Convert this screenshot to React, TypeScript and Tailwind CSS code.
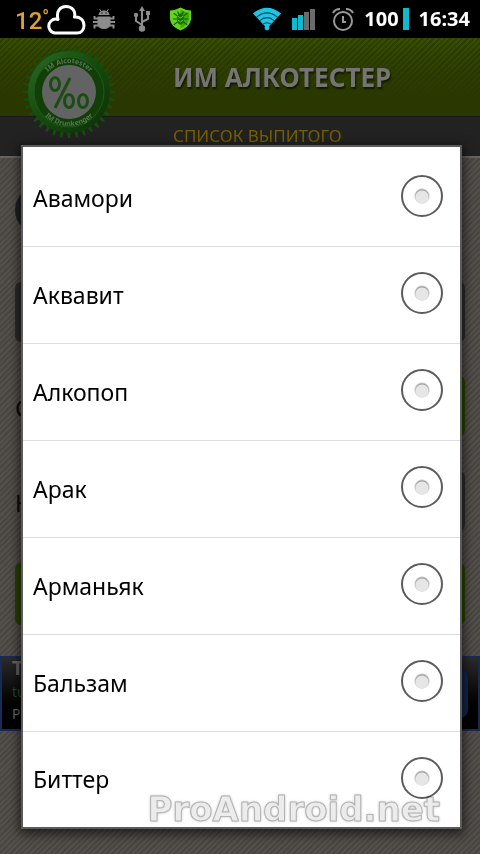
const drinks = ['Авамори', 'Аквавит', 'Алкопоп', 'Арак', 'Арманьяк', 'Бальзам', 'Биттер'];

const teeth = Array.from({ length: 36 }, (_, i) => i * 10);

function WeatherIcon() {
  return (
    <svg width="40" height="32" viewBox="0 0 40 32" fill="none" stroke="#fff" strokeWidth="3" strokeLinejoin="round">
      <path d="M8 30 A7 7 0 0 1 4 18 Q7 15 11 16.5 C9 8 13 3.5 19 3.5 C25 3.5 29 8 27.5 14 C33 13.5 37 17 37 22.5 C37 27 34 30 30 30 Z" />
    </svg>
  );
}

function DebugIcon() {
  return (
    <svg width="22" height="22" viewBox="0 0 22 22" fill="#8c8c8c" stroke="#8c8c8c">
      <path d="M5.5 7 C6 1 16 1 16.5 7 Z" stroke="none" />
      <path d="M6.5 1 L8.5 4 M15.5 1 L13.5 4" fill="none" />
      <path d="M5 10.5 H1.5 V8 M5 14 H0 M5 17.5 H1.5 V20.5 M17 10.5 H20.5 V8 M17 14 H22 M17 17.5 H20.5 V20.5" fill="none" strokeWidth="2" />
      <path d="M4.5 8.5 H17.5 V17 Q16 21 11 21 Q6 21 4.5 17 Z" stroke="none" />
      <path d="M8.5 5 H9.7 M12.3 5 H13.5" stroke="#000" />
    </svg>
  );
}

function UsbIcon() {
  return (
    <svg width="18" height="26" viewBox="0 0 18 26" fill="none" stroke="#8c8c8c" strokeWidth="2">
      <path d="M9 4 V22 M9 19 L3 15 V10 M9 16 L15 13 V8" />
      <path d="M9 0 L12 5 H6 Z M13 5 h4 v4 h-4 Z" fill="#8c8c8c" stroke="none" />
      <circle cx="3" cy="9" r="2.2" fill="#8c8c8c" stroke="none" />
      <circle cx="9" cy="22.5" r="3.2" fill="#8c8c8c" stroke="none" />
    </svg>
  );
}

function ShieldIcon() {
  return (
    <svg width="23" height="24" viewBox="0 0 24 24">
      <path d="M12 0 Q17 3 23 3 V12 Q22 20 12 24 Q2 20 1 12 V3 Q7 3 12 0Z" fill="#63d61b" />
      <path d="M12 2 Q17 5 21 5 V12 Q20 18 12 22Z" fill="#3eab0c" />
      <g fill="none" stroke="#155c05" strokeWidth="1.3">
        <path d="M9 9 L5 6 M15 9 L19 6 M8 12 H4 M16 12 H20 M9 15 L5 18 M15 15 L19 18 M10 7 L9 4 M14 7 L15 4" />
      </g>
      <ellipse cx="12" cy="12" rx="4" ry="6" fill="#1b6d08" />
      <path d="M9 9 L12 11 L15 9 M9 13 L12 15 L15 13" fill="none" stroke="#65cf25" />
    </svg>
  );
}

function WifiIcon() {
  return (
    <svg width="30" height="24" viewBox="0 0 32 24">
      <path d="M1 6 Q16 -6 31 6 L18 20 A2.5 2.5 0 1 1 14 20 Z" fill="#1fc4e4" />
      <g fill="none" stroke="#00495a" strokeWidth="1.2">
        <path d="M5 10 Q16 1 27 10 M8 14 Q16 7 24 14 M11 18 Q16 14 21 18" />
      </g>
    </svg>
  );
}

function SignalIcon() {
  return (
    <svg width="24" height="22" viewBox="0 0 24 22">
      <path d="M0 10 h5 v12 h-5 Z M6 7 h5 v15 h-5 Z" fill="#12b9cd" />
      <path d="M12 4 h5 v18 h-5 Z M18 1 h5 v21 h-5 Z" fill="#6b6b6b" />
    </svg>
  );
}

function AlarmIcon() {
  return (
    <svg width="22" height="24" viewBox="0 0 22 24" fill="none" stroke="#999" strokeWidth="2">
      <circle cx="11" cy="14" r="9" />
      <path d="M11 9 V15 H14 M1 6 Q3 2 8 2 M21 6 Q19 2 14 2" />
    </svg>
  );
}

function Badge() {
  return (
    <svg className="block" width="96" height="96" viewBox="-48 -48 96 96" fontFamily="Noto Sans, Open Sans, sans-serif">
      <defs>
        <linearGradient id="ring" x1="0" y1="0" x2="1" y2="1">
          <stop offset="0" stopColor="#2c6a27" />
          <stop offset="0.45" stopColor="#154d0d" />
          <stop offset="1" stopColor="#0c2f08" />
        </linearGradient>
        <path id="arcTop" d="M-29 0 A29 29 0 0 1 29 0" />
        <path id="arcBottom" d="M-34 0 A34 34 0 0 0 34 0" />
      </defs>
      {teeth.map((angle) => (
        <path key={angle} d="M-2 -39 L-1 -46 H1 L2 -39 Z" fill="#174b10" transform={`rotate(${angle})`} />
      ))}
      <circle r="41" fill="url(#ring)" />
      <circle r="35" fill="#123f08" stroke="#225a1c" />
      <circle r="27" fill="#636363" />
      <text fontSize="7" fontWeight="700" fill="#567554" textAnchor="middle">
        <textPath href="#arcTop" startOffset="50%">IM Alcotester</textPath>
      </text>
      <text fontSize="7" fontWeight="700" fill="#567554" textAnchor="middle">
        <textPath href="#arcBottom" startOffset="50%">IM Drunkenger</textPath>
      </text>
      <g fill="none" stroke="#1b4d13" strokeWidth="3">
        <ellipse cx="-14" cy="-8" rx="4.5" ry="6.5" />
        <ellipse cx="0" cy="9" rx="4.5" ry="6.5" />
        <ellipse cx="14" cy="9" rx="4.5" ry="6.5" />
        <path d="M1 -14 L-14 16" />
      </g>
    </svg>
  );
}

function StatusBar() {
  return (
    <div className="flex h-[38px] items-center bg-black pr-2.5 pl-[15px] font-bold text-white">
      <span className="flex w-8 items-start pt-1 font-['Roboto',sans-serif] text-2xl font-medium text-[#e0a030]">
        12<span className="text-lg leading-6">°</span>
      </span>
      <WeatherIcon />
      <div className="ml-1.5 flex items-center gap-[18px]">
        <DebugIcon />
        <UsbIcon />
        <ShieldIcon />
      </div>
      <div className="ml-auto flex items-center">
        <WifiIcon />
        <span className="ml-2.5"><SignalIcon /></span>
        <span className="ml-4"><AlarmIcon /></span>
        <span className="ml-2.5 text-xl">100</span>
        <span className="ml-1 h-[22px] w-1.5 bg-[#12b9cd]" />
        <span className="ml-2.5 text-xl">16:34</span>
      </div>
    </div>
  );
}

function Header() {
  return (
    <header className="relative">
      <div className="flex h-[78px] items-center bg-[linear-gradient(#2a380000,#2a3800_85%),repeating-linear-gradient(135deg,#0000_0_2px,#0003_2px_4px),linear-gradient(#3a5000,#2a3800)] pl-[173px]">
        <h1 className="text-[26px] font-bold text-[#747474] [text-shadow:1px_2px_2px_#0009]">ИМ АЛКОТЕСТЕР</h1>
      </div>
      <div className="flex h-10 items-center border-t border-[#1a1a1a] bg-[#222] pb-0.5 pl-[173px]">
        <h2 className="text-[17px] text-[#756000]">СПИСОК ВЫПИТОГО</h2>
      </div>
      <div className="absolute top-1.5 left-[21px]">
        <Badge />
      </div>
    </header>
  );
}

function Calculator() {
  return (
    <main className="flex grow flex-col border-t-2 border-[#67635f] pt-7 text-2xl text-[#0b0b0b]">
      <div className="h-[68px] px-[15px]">
        <span className="block h-12 w-12 rounded-full bg-[#1d2024]" />
      </div>
      <div className="mx-[15px] mt-7 h-[60px] rounded-md bg-[#2b2b2b]" />
      <div className="mx-[15px] mt-[34px] flex h-[60px] items-center justify-between">
        <span className="pt-1">С</span>
        <span className="h-full w-1/2 rounded-md bg-[#2a4000]" />
      </div>
      <div className="mx-[15px] mt-[35px] flex h-[60px] items-center justify-between">
        <span className="pt-1">К</span>
        <span className="h-full w-1/2 rounded-md bg-[#2b2b2b]" />
      </div>
      <div className="mx-[15px] mt-8 h-[62px] rounded-md bg-[#2a4000]" />
      <div className="mt-[31px] flex h-[75px] items-center justify-between border-2 border-[#172b55] bg-linear-to-b from-[#2b2b2b] to-black px-2.5">
        <div className="pb-2">
          <p className="text-xl leading-6 font-bold text-[#666]">T</p>
          <p className="text-sm leading-6 text-[#1d4a2b]">tu</p>
          <p className="text-sm text-[#666]">P</p>
        </div>
        <span className="h-12 w-12 rounded-lg bg-[#14244a]" />
      </div>
    </main>
  );
}

function DrinkDialog() {
  return (
    <div role="dialog" aria-label="Напиток" className="absolute top-[145px] right-[18px] left-[21px] border-2 border-[#5b5b5b] bg-white pt-[3px] shadow-[0_3px_10px_2px_#0009]">
      {drinks.map((drink) => (
        <label key={drink} className="flex h-[97px] items-center justify-between border-b border-[#dedede] pr-[17px] pl-2.5 text-[23px] text-black last-of-type:h-[95px] last-of-type:border-0">
          {drink}
          <input
            type="radio"
            name="drink"
            className="mb-1 size-[42px] appearance-none rounded-full border-2 border-[#5c5c5c] bg-[radial-gradient(circle_at_19px_20px,#e6e6e6_0_6px,#e6e6e600_7px),radial-gradient(circle_at_19px_19px,#999_0_6px,#fff_8px)]"
          />
        </label>
      ))}
      <div className="absolute right-5 bottom-0 font-['DejaVu_Sans',sans-serif] text-[34px] leading-9 font-bold text-[#ececec] mix-blend-multiply [-webkit-text-stroke:1px_#b4b4b4] [text-shadow:0_0_3px_#aaa]">
        ProAndroid.net
      </div>
    </div>
  );
}

export default function App() {
  return (
    <div className="relative flex min-h-screen flex-col bg-[#54504b] bg-[repeating-linear-gradient(135deg,#0000_0_2px,#0002_2px_4px)] font-['Noto_Sans','Open_Sans',sans-serif]">
      <StatusBar />
      <Header />
      <Calculator />
      <DrinkDialog />
    </div>
  );
}
